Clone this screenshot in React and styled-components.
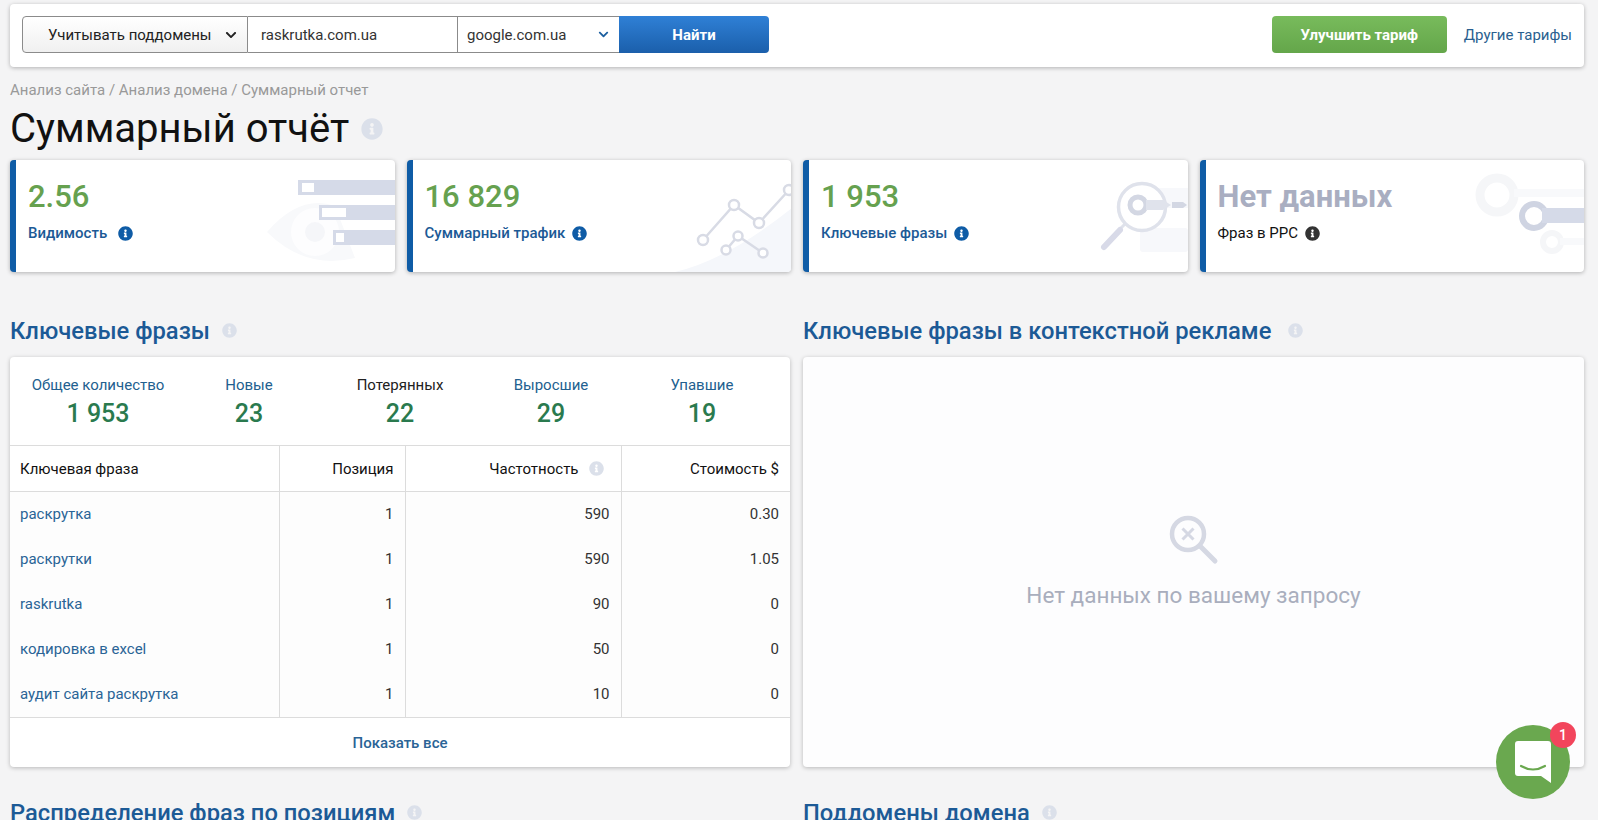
import React from "react";
import styled, { createGlobalStyle } from "styled-components";
import { FaInfoCircle, FaChevronDown } from "react-icons/fa";

const GlobalStyle = createGlobalStyle`
  html, body {
    margin: 0;
    height: 100%;
    overflow: hidden;
    background: #f4f4f5;
    font-family: Roboto, "Noto Sans", sans-serif;
    color: #111;
  }
`;

const Page = styled.div`
  padding: 4px 14px 0 10px;
  height: 820px;
  box-sizing: border-box;
  overflow: hidden;
`;

const TopBar = styled.div`
  display: flex;
  align-items: center;
  justify-content: space-between;
  height: 63px;
  padding: 0 12px 2px 12px;
  box-sizing: border-box;
  background: #fff;
  border-radius: 4px;
  box-shadow: 0 1px 4px rgba(0, 0, 0, 0.28);
`;

const SearchGroup = styled.div`
  display: flex;
  height: 37px;
`;

const ModeSelect = styled.div`
  width: 226px;
  box-sizing: border-box;
  display: flex;
  align-items: center;
  gap: 13px;
  padding-left: 25px;
  font-size: 15px;
  color: #222;
  border: 1px solid #8b8b8b;
  border-radius: 4px 0 0 4px;
  background: linear-gradient(#fff, #f0f0f0);
`;

const DomainInput = styled.div`
  width: 210px;
  box-sizing: border-box;
  display: flex;
  align-items: center;
  padding-left: 13px;
  font-size: 15px;
  color: #333;
  border: solid #8b8b8b;
  border-width: 1px 1px 1px 0;
`;

const EngineSelect = styled.div`
  width: 161px;
  box-sizing: border-box;
  display: flex;
  align-items: center;
  justify-content: space-between;
  padding: 0 10px 0 9px;
  font-size: 15px;
  color: #333;
  border: solid #8b8b8b;
  border-width: 1px 0;
  svg {
    color: #1c5f9f;
  }
`;

const FindButton = styled.div`
  width: 150px;
  display: flex;
  align-items: center;
  justify-content: center;
  font-size: 15px;
  font-weight: 700;
  color: #fff;
  border-radius: 0 4px 4px 0;
  background: linear-gradient(#2f80d6, #1b5fab);
`;

const TariffBlock = styled.div`
  display: flex;
  align-items: center;
  gap: 17px;
`;

const UpgradeButton = styled.div`
  width: 175px;
  height: 37px;
  display: flex;
  align-items: center;
  justify-content: center;
  font-size: 15px;
  font-weight: 700;
  color: #fff;
  border-radius: 4px;
  background: linear-gradient(#78bb5c, #64a64a);
`;

const OtherLink = styled.a`
  font-size: 15px;
  color: #2a5f8f;
`;

const Crumbs = styled.div`
  margin-top: 15px;
  font-size: 15px;
  line-height: 16px;
  color: #999;
`;

const TitleRow = styled.div`
  display: flex;
  align-items: center;
  gap: 12px;
  height: 49px;
  margin-top: 6px;
`;

const PageTitle = styled.h1`
  margin: 0;
  font-size: 40px;
  font-weight: 400;
  color: #111;
`;

const Info = styled(FaInfoCircle)`
  flex: none;
  font-size: ${(p) => p.$size || 14}px;
  color: ${(p) => p.$color || "#dbe0ea"};
`;

const Metrics = styled.div`
  display: grid;
  grid-template-columns: repeat(4, 1fr);
  gap: 12px;
  margin-top: 7px;
`;

const Metric = styled.div`
  position: relative;
  height: 112px;
  box-sizing: border-box;
  padding: 18px 0 0 12px;
  overflow: hidden;
  background: #fff;
  border-left: 6px solid #0f5ca6;
  border-radius: 4px;
  box-shadow: 0 1px 4px rgba(0, 0, 0, 0.28);
`;

const MetricValue = styled.div`
  font-size: 31px;
  line-height: 38px;
  font-weight: ${(p) => (p.$empty ? 700 : 500)};
  color: ${(p) => (p.$empty ? "#a9aec1" : "#66a14f")};
`;

const MetricLabel = styled.div`
  display: flex;
  align-items: center;
  gap: ${(p) => p.$gap || 7}px;
  margin-top: 8px;
  font-size: 15px;
  line-height: 18px;
  font-weight: ${(p) => (p.$dark ? 400 : 500)};
  color: ${(p) => (p.$dark ? "#111" : "#1c5a96")};
`;

const Art = styled.svg`
  position: absolute;
  left: -6px;
  top: 0;
  width: 385px;
  height: 112px;
`;

const Columns = styled.div`
  display: grid;
  grid-template-columns: 780px 781px;
  gap: 13px;
`;

const Section = styled.section`
  display: flex;
  flex-direction: column;
`;

const SectionTitle = styled.div`
  display: flex;
  align-items: center;
  gap: ${(p) => p.$gap || 12}px;
  height: 27px;
  margin: ${(p) => p.$top}px 0 13px;
  font-size: 23.75px;
  font-weight: 500;
  color: #1c5a96;
`;

const Panel = styled.div`
  height: 410px;
  background: #fff;
  border-radius: 4px;
  box-shadow: 0 1px 4px rgba(0, 0, 0, 0.25);
`;

const Stats = styled.div`
  display: grid;
  grid-template-columns: repeat(5, 151px);
  justify-content: center;
  height: 88px;
  box-sizing: border-box;
  padding-top: 20px;
  text-align: center;
`;

const StatLabel = styled.div`
  font-size: 15px;
  line-height: 17px;
  color: ${(p) => (p.$dark ? "#222" : "#22608f")};
`;

const StatValue = styled.div`
  margin-top: 4px;
  font-size: 25px;
  line-height: 32px;
  font-weight: 500;
  color: #2a7a4e;
`;

const Table = styled.table`
  width: 100%;
  table-layout: fixed;
  border-collapse: collapse;
  font-size: 15px;
`;

const HeadCell = styled.th`
  width: ${(p) => p.$w || "auto"};
  height: 46px;
  padding: 0 ${(p) => p.$pr || 11}px 0 10px;
  box-sizing: border-box;
  font-weight: 400;
  color: #111;
  text-align: ${(p) => (p.$left ? "left" : "right")};
  border-top: 1px solid #dcdcdc;
  border-bottom: 1px solid #dcdcdc;
  border-left: ${(p) => (p.$left ? "none" : "1px solid #dcdcdc")};
  svg {
    margin: 0 0 -2px 10px;
  }
`;

const Cell = styled.td`
  height: 45px;
  padding: 0 11px 0 10px;
  box-sizing: border-box;
  color: #333;
  text-align: right;
  background: #fdfdfd;
  border-left: 1px solid #dcdcdc;
`;

const PhraseCell = styled(Cell)`
  color: #2a6496;
  text-align: left;
  border-left: none;
`;

const ShowAll = styled.div`
  height: 50px;
  display: flex;
  align-items: center;
  justify-content: center;
  font-size: 15px;
  font-weight: 500;
  color: #2a6496;
  border-top: 1px solid #dcdcdc;
`;

const EmptyPanel = styled(Panel)`
  display: flex;
  flex-direction: column;
  align-items: center;
  justify-content: center;
  padding-bottom: 3px;
  box-sizing: border-box;
  background: #fdfdfe;
`;

const EmptyText = styled.div`
  margin-top: 15px;
  font-size: 22.5px;
  color: #a9aebd;
`;

const Chat = styled.div`
  position: fixed;
  left: 1496px;
  top: 725px;
  width: 74px;
  height: 74px;
  display: flex;
  align-items: center;
  justify-content: center;
  border-radius: 50%;
  background: #6aa84f;
`;

const Badge = styled.div`
  position: absolute;
  right: -6px;
  top: -3px;
  width: 26px;
  height: 26px;
  display: flex;
  align-items: center;
  justify-content: center;
  font-size: 14px;
  font-weight: 500;
  color: #fff;
  border-radius: 50%;
  background: #f2455c;
`;

const keywords = [
  ["раскрутка", "1", "590", "0.30"],
  ["раскрутки", "1", "590", "1.05"],
  ["raskrutka", "1", "90", "0"],
  ["кодировка в excel", "1", "50", "0"],
  ["аудит сайта раскрутка", "1", "10", "0"],
];

const stats = [
  ["Общее количество", "1 953"],
  ["Новые", "23"],
  ["Потерянных", "22", true],
  ["Выросшие", "29"],
  ["Упавшие", "19"],
];

const EyeArt = () => (
  <Art viewBox="0 0 385 112">
    <path d="M257 72 Q290 34 325 46 L345 98 Q295 110 257 72Z" fill="#f8f9fb" />
    <circle cx="305" cy="72" r="24" fill="#fdfdfe" />
    <circle cx="305" cy="72" r="10" fill="#f5f6f9" />
    <rect x="288" y="20" width="97" height="15" fill="#d5dae8" />
    <rect x="292" y="23" width="12" height="9" fill="#fff" />
    <rect x="309" y="45" width="76" height="15" fill="#d5dae8" />
    <rect x="312" y="48" width="24" height="9" fill="#fff" />
    <rect x="323" y="70" width="62" height="15" fill="#d5dae8" />
    <rect x="326" y="73" width="8" height="9" fill="#fff" />
  </Art>
);

const ChartArt = () => (
  <Art viewBox="0 0 385 112">
    <path d="M268 112 Q320 100 385 48 V112Z" fill="#f5f7fb" />
    <g fill="#fff" stroke="#d8dbe5" strokeWidth="2.5">
      <path d="M296 80 L327 45 L352 63 L382 30" fill="none" />
      <path d="M319 90 L331 76 L356 93" fill="none" />
      <circle cx="296" cy="80" r="5" />
      <circle cx="327" cy="45" r="5" />
      <circle cx="352" cy="63" r="5" />
      <circle cx="382" cy="30" r="5" />
      <circle cx="319" cy="90" r="4.5" />
      <circle cx="331" cy="76" r="4.5" />
      <circle cx="356" cy="93" r="4.5" />
    </g>
  </Art>
);

const LoupeArt = () => (
  <Art viewBox="0 0 385 112">
    <rect x="336" y="28" width="49" height="20" fill="#f7f8fb" />
    <rect x="337" y="68" width="48" height="24" rx="3" fill="#f7f8fb" />
    <circle cx="339" cy="47" r="23.5" fill="#fff" stroke="#dfe2eb" strokeWidth="3.5" />
    <circle cx="335" cy="45" r="8" fill="none" stroke="#d3d7e3" strokeWidth="5" />
    <path d="M343 40 H360 L368 45 L360 50 H343Z" fill="#e0e3ec" />
    <path d="M369 42 H380 L384 45 L380 48 H369Z" fill="#d3d7e3" />
    <path d="M322 64 L317 69" stroke="#dfe2eb" strokeWidth="3" />
    <path d="M317 70 L301 87" stroke="#d8dae8" strokeWidth="6" strokeLinecap="round" />
  </Art>
);

const KeysArt = () => (
  <Art viewBox="0 0 385 112">
    <circle cx="297" cy="35" r="17" fill="none" stroke="#f5f6f8" strokeWidth="9" />
    <rect x="314" y="29" width="71" height="8" fill="#f8f9fb" />
    <circle cx="352" cy="82" r="9" fill="none" stroke="#f5f6f8" strokeWidth="6" />
    <rect x="360" y="78" width="25" height="7" fill="#f8f9fb" />
    <circle cx="334" cy="56" r="12" fill="#fff" stroke="#cfd4e2" strokeWidth="6" />
    <rect x="342" y="48" width="43" height="15" fill="#d5dae8" />
  </Art>
);

export default function App() {
  return (
    <Page>
      <GlobalStyle />
      <TopBar>
        <SearchGroup>
          <ModeSelect>
            Учитывать поддомены
            <FaChevronDown size={12} />
          </ModeSelect>
          <DomainInput>raskrutka.com.ua</DomainInput>
          <EngineSelect>
            google.com.ua
            <FaChevronDown size={11} />
          </EngineSelect>
          <FindButton>Найти</FindButton>
        </SearchGroup>
        <TariffBlock>
          <UpgradeButton>Улучшить тариф</UpgradeButton>
          <OtherLink>Другие тарифы</OtherLink>
        </TariffBlock>
      </TopBar>

      <Crumbs>Анализ сайта / Анализ домена / Суммарный отчет</Crumbs>
      <TitleRow>
        <PageTitle>Суммарный отчёт</PageTitle>
        <Info $size={22} />
      </TitleRow>

      <Metrics>
        <Metric>
          <MetricValue>2.56</MetricValue>
          <MetricLabel $gap={11}>
            Видимость <Info $size={15} $color="#0f5ca6" />
          </MetricLabel>
          <EyeArt />
        </Metric>
        <Metric>
          <MetricValue>16 829</MetricValue>
          <MetricLabel>
            Суммарный трафик <Info $size={15} $color="#0f5ca6" />
          </MetricLabel>
          <ChartArt />
        </Metric>
        <Metric>
          <MetricValue>1 953</MetricValue>
          <MetricLabel>
            Ключевые фразы <Info $size={15} $color="#0f5ca6" />
          </MetricLabel>
          <LoupeArt />
        </Metric>
        <Metric>
          <MetricValue $empty>Нет данных</MetricValue>
          <MetricLabel $dark>
            Фраз в PPC <Info $size={15} $color="#333" />
          </MetricLabel>
          <KeysArt />
        </Metric>
      </Metrics>

      <Columns>
        <Section>
          <SectionTitle $top={45}>
            Ключевые фразы <Info $size={15} />
          </SectionTitle>
          <Panel>
            <Stats>
              {stats.map(([label, value, dark]) => (
                <div key={label}>
                  <StatLabel $dark={dark}>{label}</StatLabel>
                  <StatValue>{value}</StatValue>
                </div>
              ))}
            </Stats>
            <Table>
              <thead>
                <tr>
                  <HeadCell $left $w="269px">
                    Ключевая фраза
                  </HeadCell>
                  <HeadCell $w="126px">Позиция</HeadCell>
                  <HeadCell $w="216px" $pr={17}>
                    Частотность
                    <Info $size={15} />
                  </HeadCell>
                  <HeadCell>Стоимость $</HeadCell>
                </tr>
              </thead>
              <tbody>
                {keywords.map(([phrase, pos, freq, cost]) => (
                  <tr key={phrase}>
                    <PhraseCell>{phrase}</PhraseCell>
                    <Cell>{pos}</Cell>
                    <Cell>{freq}</Cell>
                    <Cell>{cost}</Cell>
                  </tr>
                ))}
              </tbody>
            </Table>
            <ShowAll>Показать все</ShowAll>
          </Panel>
          <SectionTitle $top={32}>
            Распределение фраз по позициям <Info $size={15} />
          </SectionTitle>
        </Section>

        <Section>
          <SectionTitle $top={45} $gap={17}>
            Ключевые фразы в контекстной рекламе <Info $size={15} />
          </SectionTitle>
          <EmptyPanel>
            <svg width="54" height="54" viewBox="0 0 54 54" fill="none">
              <circle cx="21" cy="21" r="16" stroke="#d5d8e3" strokeWidth="4.5" />
              <path d="M15.5 15.5 L26.5 26.5 M26.5 15.5 L15.5 26.5" stroke="#d5d8e3" strokeWidth="3" />
              <path d="M33 33 L48 48" stroke="#d5d8e3" strokeWidth="5" strokeLinecap="round" />
            </svg>
            <EmptyText>Нет данных по вашему запросу</EmptyText>
          </EmptyPanel>
          <SectionTitle $top={32}>
            Поддомены домена <Info $size={15} />
          </SectionTitle>
        </Section>
      </Columns>

      <Chat>
        <svg width="36" height="42" viewBox="0 0 36 42">
          <path d="M3 0 H33 Q36 0 36 3 V42 L26 35 H3 Q0 35 0 32 V3 Q0 0 3 0Z" fill="#fff" />
          <path d="M6 25 Q18 32 30 25" fill="none" stroke="#6aa84f" strokeWidth="2.2" strokeLinecap="round" />
        </svg>
        <Badge>1</Badge>
      </Chat>
    </Page>
  );
}
